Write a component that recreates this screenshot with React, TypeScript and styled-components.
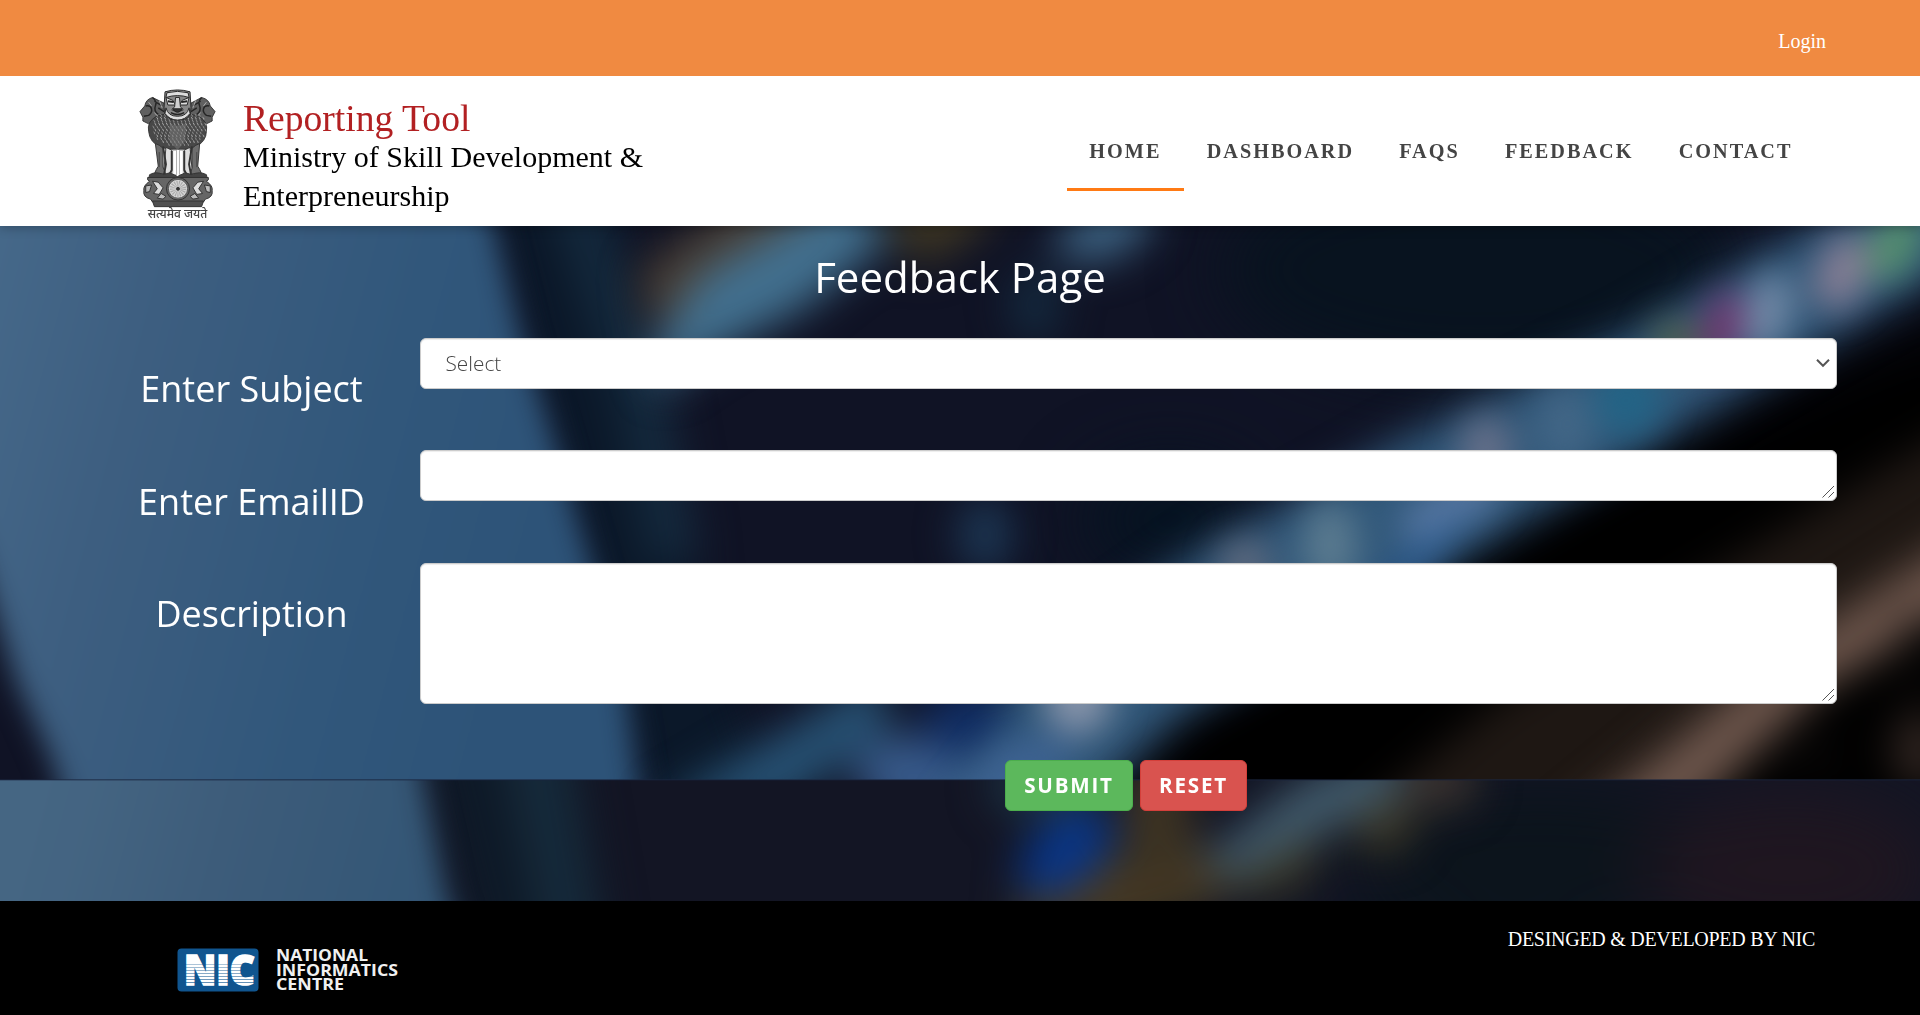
import React from 'react';
import styled, { createGlobalStyle } from 'styled-components';

const serif = `"Liberation Serif", "Times New Roman", serif`;
const sans = `"Open Sans", "Noto Sans", sans-serif`;

const GlobalStyle = createGlobalStyle`
  *, *::before, *::after { box-sizing: border-box; }
  body { margin: 0; background: #000; font-family: ${sans}; }
`;

const Page = styled.div`
  display: flex;
  flex-direction: column;
  width: 100%;
  height: 1015px;
  overflow: hidden;
`;

const TopBar = styled.div`
  display: flex;
  justify-content: flex-end;
  height: 76px;
  padding: 30px 94px 0 0;
  background: #f08a41;
`;

const LoginLink = styled.a`
  color: #fff;
  font: 20px/23px ${serif};
  text-decoration: none;
`;

const Header = styled.header`
  display: flex;
  justify-content: space-between;
  height: 150px;
  padding: 0 105px 0 137px;
  background: #fff;
  position: relative;
  z-index: 1;
  box-shadow: 0 2px 10px rgba(0, 0, 0, 0.25);
  clip-path: inset(0 0 -14px 0);
`;

const Brand = styled.div`
  display: flex;
  gap: 25px;
  padding-top: 10px;
`;

const BrandText = styled.div`
  width: 420px;
  padding-top: 14px;
  font-family: ${serif};
`;

const BrandTitle = styled.div`
  margin-bottom: -1px;
  color: #b22022;
  font-size: 37.6px;
  line-height: 38px;
`;

const BrandSubtitle = styled.div`
  color: #000;
  font-size: 30px;
  line-height: 39px;
`;

const Nav = styled.nav`
  display: flex;
  align-items: flex-start;
  padding-top: 36px;
`;

const NavLink = styled.a<{ $active?: boolean }>`
  height: 79px;
  padding: 27px 22.6px 0;
  border-bottom: 3px solid ${(p) => (p.$active ? '#ff7a14' : 'transparent')};
  color: #444;
  font: bold 20.25px/24px ${serif};
  letter-spacing: 2px;
  text-decoration: none;
`;

const Main = styled.main`
  position: relative;
  z-index: 0;
  height: 675px;
  padding: 0 83px;
  overflow: hidden;
`;

const Backdrop = styled.svg`
  position: absolute;
  inset: 0;
  z-index: -1;
`;

const PageTitle = styled.h1`
  margin: 0;
  padding-top: 21px;
  height: 112px;
  color: #fff;
  font-size: 42px;
  font-weight: 400;
  line-height: 60px;
  text-align: center;
`;

const Form = styled.form`
  display: grid;
  grid-template-columns: 337px 1417px;
`;

const Label = styled.label<{ $top?: number }>`
  padding-top: ${(p) => p.$top ?? 26}px;
  color: #fff;
  font-size: 36px;
  line-height: 50px;
  text-align: center;
`;

const Field = styled.div<{ $height: number }>`
  position: relative;
  display: flex;
  align-items: flex-start;
  height: ${(p) => p.$height}px;
`;

const controlStyle = `
  display: block;
  width: 100%;
  margin: 0;
  border: 1px solid #ccc;
  border-radius: 6px;
  background-color: #fff;
  color: #444;
  font-family: ${sans};
  font-size: 20.8px;
  font-weight: 300;
  box-shadow: inset 0 1px 1px rgba(0, 0, 0, 0.075);
  outline: none;
`;

const Select = styled.select`
  ${controlStyle}
  height: 51px;
  padding: 0 24.5px 2px;
  appearance: none;
`;

const TextArea = styled.textarea<{ $height: number }>`
  ${controlStyle}
  height: ${(p) => p.$height}px;
  padding: 10px 20px;
  resize: none;
`;

const Chevron = styled.svg`
  position: absolute;
  top: 20px;
  right: 7px;
  pointer-events: none;
`;

const Grip = styled.svg<{ $top: number }>`
  position: absolute;
  top: ${(p) => p.$top}px;
  right: 2px;
  pointer-events: none;
`;

const Actions = styled.div`
  grid-column: 2;
  display: flex;
  justify-content: center;
  gap: 7px;
  padding-right: 5px;
`;

const Button = styled.button<{ $color: string; $edge: string; $width: number }>`
  width: ${(p) => p.$width}px;
  height: 51px;
  padding: 0;
  border: 1px solid ${(p) => p.$edge};
  border-radius: 6px;
  background: ${(p) => p.$color};
  color: #fff;
  font: bold 20.6px/27px ${sans};
  letter-spacing: 1.8px;
`;

const Footer = styled.footer`
  display: flex;
  justify-content: space-between;
  height: 114px;
  padding: 27px 105px 0 176px;
  background: #000;
`;

const Credit = styled.div`
  color: #fff;
  font: 20px/23px ${serif};
  letter-spacing: -0.28px;
`;

const NicLogo = styled.svg`
  display: block;
  margin-top: 9px;
`;

function Emblem() {
  const curls: React.ReactNode[] = [];
  for (let r = 0; r < 11; r++) {
    const half = [22, 24, 25, 26, 26, 26, 25, 24, 22, 18, 10][r];
    for (let x = -half; x <= half; x += 4) {
      curls.push(
        <path
          key={`${r}-${x}`}
          d={`M${40 + x + (r % 2) * 2} ${27 + r * 3.1}q1.6 .2 1.4 2.4`}
          stroke={r % 2 ? '#b5b5b5' : '#999'}
          strokeWidth="0.9"
          fill="none"
        />,
      );
    }
  }
  return (
    <svg width="81" height="136" viewBox="0 0 81 136" preserveAspectRatio="none" aria-label="State Emblem of India">
      <g stroke="#2d2d2d" strokeWidth="0.9" strokeLinejoin="round">
        <path d="M26 15L14 9Q7 11 6 18L1 24L4 30L4 34L10 37L13 35L18 42L29 38Z" fill="#606060" />
        <path d="M54 15L65 9Q73 11 74 18L79 24L76 30L76 34L70 37L67 35L62 42L51 38Z" fill="#606060" />
        <path d="M14 9Q19 13 17 18T20 27M7 18Q12 17 13 21T10 28L5 29M16 13L24 18M20 20L26 24M65 9Q61 13 63 18T60 27M73 18Q68 17 67 21T70 28L75 29M64 13L56 18M60 20L54 24" fill="none" stroke="#252525" strokeWidth="1.5" />
        <path d="M10 14L13 18M16 25L20 30M21 12L24 20M70 14L67 18M64 25L60 30M59 12L56 20" fill="none" stroke="#b5b5b5" />
        <path d="M18 29Q8 35 10 45Q11 57 23 62Q31 65 40 64Q50 65 58 62Q70 56 70 45Q72 35 62 29Q52 25 40 26Q28 25 18 29Z" fill="#484848" />
      </g>
      <g>{curls}</g>
      <path d="M32 36Q40 42 49 36L48 55L40 65L32 55Z" fill="#777" opacity=".5" />
      <g stroke="#242424" strokeWidth="1">
        <path d="M27 3Q40 -1 53 3L54 20Q54 29 48 32H33Q26 29 26 20Z" fill="#888" />
        <path d="M29 4Q40 1 51 4L52 9Q40 5 28 9Z" fill="#ddd" />
        <path d="M28 9L35 12L38 17L30 17ZM52 9L45 12L42 17L50 17Z" fill="#ddd" />
        <path d="M30 13L36 14M44 14L50 13" strokeWidth="2" />
        <path d="M38 9L37 19L34 22L40 25L46 22L43 19L42 9Z" fill="#cfcfcf" />
        <path d="M35 21L45 21L42 24H38Z" fill="#333" />
        <path d="M28 20Q30 29 40 29Q50 29 52 20L53 26Q48 33 40 33Q32 33 27 26Z" fill="#ddd" />
        <path d="M33 25Q40 29 47 25" fill="none" strokeWidth="1.6" />
      </g>
      <g stroke="#333" strokeWidth="1">
        <path d="M17 58Q21 59 25 63V83L28 90H16Q18 85 20 82Z" fill="#6d6d6d" />
        <path d="M63 58Q59 59 55 63V83L52 90H65Q63 85 61 82Z" fill="#6d6d6d" />
        <path d="M28 62L34 65L34 88L28 93L26 84Z" fill="#dedede" />
        <path d="M53 62L47 65L47 88L53 93L55 84Z" fill="#dedede" />
        <path d="M35 65H39V91H35ZM42 65H46V91H42Z" fill="#fff" stroke="#aaa" />
        <path d="M25 61L28 80L26 91M55 61L52 80L54 91M34 66V86L30 94M47 66V86L51 94" fill="none" strokeWidth="2" />
        <path d="M21 67V83M60 67V83" stroke="#444" />
        <path d="M11 91Q18 87 25 91L32 89L40 93L48 89L55 91Q63 87 70 91L71 96H10Z" fill="#444" />
      </g>
      <g stroke="#303030" strokeWidth="1">
        <path d="M9 94H72Q73 97 70 98Q77 103 76 108Q77 115 69 117L67 120H14L12 117Q4 115 5 108Q4 103 11 98Q8 97 9 94Z" fill="#666" />
        <path d="M14 98L20 99L25 105L21 112L15 111L19 106ZM67 98L61 99L56 105L60 112L66 111L62 106Z" fill="#ddd" />
        <path d="M7 103L13 102L11 109L7 110ZM74 103L68 102L70 109L74 110ZM23 111L28 114L25 117L19 116ZM58 111L53 114L56 117L62 116Z" fill="#bbb" />
        <path d="M14 119H67L65 125H16Z" fill="#505050" />
        <circle cx="40.5" cy="106" r="12" fill="#666" />
        <circle cx="40.5" cy="106" r="10" fill="#d7d7d7" stroke="#555" />
        <circle cx="40.5" cy="106" r="5.5" fill="none" stroke="#aaa" strokeWidth="6" strokeDasharray="1 1" />
        <circle cx="40.5" cy="106" r="1.6" fill="#333" />
      </g>
    </svg>
  );
}

const EmblemBox = styled.div`
  display: flex;
  flex-direction: column;
  align-items: center;
  width: 81px;
  margin-top: 3px;
`;

const EmblemArt = styled.div`
  height: 119px;
  svg { display: block; width: 78px; height: 128px; }
`;

const Motto = styled.div`
  color: #444;
  font: 500 12px/14px "Noto Sans Devanagari", "Lohit Devanagari", "FreeSans", "Noto Sans", sans-serif;
  white-space: nowrap;
`;

/* One 1920x780 tile of the out-of-focus photograph; it repeats vertically.
   The small light spots all lie below the part that the second tile shows. */
function Scene({ spots = false }: { spots?: boolean }) {
  return (
    <g>
      <rect x="-60" y="-60" width="2040" height="900" fill="#101325" />
      <g filter="url(#haze)">
        <ellipse cx="1480" cy="270" rx="260" ry="110" fill="#08131f" />
        <ellipse cx="1540" cy="80" rx="200" ry="80" fill="#09111c" />
        <ellipse cx="1790" cy="90" rx="150" ry="80" fill="#1d1420" />
        <ellipse cx="1170" cy="520" rx="90" ry="60" fill="#061321" />
        <path d="M2000 290L1850 345L1530 500L1390 590L1180 700L1040 840H2000Z" fill="#000" />
      </g>
      <g filter="url(#wide)">
        <path d="M425 -60L470 121L500 226L600 620L650 820H780L690 560L620 226L570 -60Z" fill="#0b1829" />
        <path d="M500 -60L560 226L620 400L650 560H700L670 400L610 226L560 -60Z" fill="#183045" opacity=".75" />
        <path d="M2000 400L1500 700L1330 840H1560L1700 720L2000 540Z" fill="#1e1713" />
      </g>
      <g filter="url(#edge)">
        <path d="M-120 -90H405L448 121L494 226L522 340L554 440L590 560L625 680L648 860H82L52 760L16 680L-12 590L-40 500L-120 300Z" fill="url(#blue)" />
      </g>
      <g filter="url(#streak)">
        <path d="M640 270L740 200L840 200L700 290L650 330Z" fill="#5e4d3a" opacity=".75" />
        <path d="M880 220L930 190L1010 190L970 240L920 268Z" fill="#443b22" opacity=".85" />
        <path d="M650 350L700 275L850 190L890 240L800 310L710 355L660 390Z" fill="#42708f" />
        <ellipse cx="1105" cy="230" rx="52" ry="28" transform="rotate(-25 1105 230)" fill="#3c6282" />
        <ellipse cx="1035" cy="305" rx="24" ry="38" fill="#142b40" />
        <ellipse cx="985" cy="535" rx="26" ry="38" fill="#1d3957" />
        <path d="M1990 150L1810 228L1630 332L1400 440L1200 550L1000 690L900 830H1060L1180 715L1430 575L1620 465L1810 350L1990 245Z" fill="#31587a" />
        <path d="M650 810L810 715L880 670L890 730L780 810Z" fill="#265072" />
        <ellipse cx="910" cy="775" rx="55" ry="40" fill="#375989" />
        <ellipse cx="965" cy="720" rx="42" ry="36" fill="#102c62" />
      </g>
      {spots && (
        <g filter="url(#spot)">
          <ellipse cx="1895" cy="245" rx="24" ry="40" transform="rotate(30 1895 245)" fill="#55906e" />
          <ellipse cx="1842" cy="272" rx="26" ry="40" transform="rotate(20 1842 272)" fill="#847d94" />
          <ellipse cx="1768" cy="312" rx="24" ry="42" transform="rotate(15 1768 312)" fill="#7088a5" />
          <ellipse cx="1722" cy="328" rx="20" ry="40" transform="rotate(12 1722 328)" fill="#6f366f" />
          <ellipse cx="1676" cy="342" rx="26" ry="22" fill="#50604c" />
          <ellipse cx="1628" cy="400" rx="34" ry="36" fill="#236486" />
          <ellipse cx="1565" cy="425" rx="30" ry="40" fill="#426686" />
          <ellipse cx="1486" cy="448" rx="26" ry="32" fill="#687089" />
          <ellipse cx="1450" cy="508" rx="55" ry="22" transform="rotate(-26 1450 508)" fill="#5878a3" />
          <ellipse cx="1330" cy="545" rx="28" ry="44" fill="#5a7a8f" />
          <ellipse cx="1245" cy="564" rx="26" ry="24" fill="#626a7d" />
          <path d="M1360 600L1420 540L1480 505L1390 610Z" fill="#2e5d92" />
          <ellipse cx="1078" cy="698" rx="34" ry="36" fill="#8794aa" />
          <path d="M940 820L1000 740L1080 735L1030 820Z" fill="#3d6291" />
        </g>
      )}
      <g filter="url(#streak)">
        <path d="M1990 515L1780 650L1560 830H1675L1820 690L1990 590Z" fill="#6c554b" />
        <ellipse cx="1810" cy="752" rx="32" ry="28" fill="#060505" />
        <ellipse cx="1920" cy="660" rx="25" ry="40" fill="#060505" />
        <ellipse cx="1920" cy="750" rx="28" ry="40" fill="#302521" />
        <ellipse cx="1130" cy="112" rx="120" ry="36" transform="rotate(-12 1130 112)" fill="#463924" />
        <ellipse cx="1158" cy="40" rx="36" ry="70" fill="#3d3223" />
        <ellipse cx="1275" cy="80" rx="50" ry="32" transform="rotate(-30 1275 80)" fill="#3a3726" />
        <ellipse cx="1383" cy="40" rx="32" ry="34" fill="#3b3729" />
        <ellipse cx="1440" cy="0" rx="38" ry="30" fill="#3a3230" />
        <path d="M1200 80L1300 0L1400 -40L1400 15L1310 60L1230 100Z" fill="#405a6e" />
        <ellipse cx="1045" cy="5" rx="55" ry="35" fill="#1b3046" />
        <ellipse cx="1066" cy="72" rx="56" ry="34" transform="rotate(-42 1066 72)" fill="#06348c" />
      </g>
    </g>
  );
}

const blurs = [
  ['spot', 17],
  ['edge', 14],
  ['streak', 21],
  ['wide', 20],
  ['haze', 34],
] as const;

function Photo() {
  return (
    <Backdrop width="1920" height="675" viewBox="0 226 1920 675">
      <defs>
        {blurs.map(([id, deviation]) => (
          <filter key={id} id={id} filterUnits="userSpaceOnUse" x="-200" y="-200" width="2320" height="1200" colorInterpolationFilters="sRGB">
            <feGaussianBlur stdDeviation={deviation} />
          </filter>
        ))}
        <linearGradient id="blue" gradientUnits="userSpaceOnUse" x1="0" y1="170" x2="600" y2="330">
          <stop offset="0" stopColor="#46698a" />
          <stop offset=".3" stopColor="#3d5e80" />
          <stop offset=".7" stopColor="#31577b" />
          <stop offset="1" stopColor="#2d5378" />
        </linearGradient>
        <clipPath id="upper"><rect x="0" y="226" width="1920" height="554" /></clipPath>
        <clipPath id="lower"><rect x="0" y="780" width="1920" height="121" /></clipPath>
      </defs>
      <g clipPath="url(#upper)"><Scene spots /></g>
      <g clipPath="url(#lower)">
        <g transform="translate(0 780)"><Scene /></g>
        <rect x="0" y="780" width="1920" height="121" fill="#404a28" opacity=".06" />
      </g>
      <rect x="0" y="779" width="1920" height="1.5" fill="#1a2740" opacity=".6" />
    </Backdrop>
  );
}

function ResizeGrip({ top }: { top: number }) {
  return (
    <Grip $top={top} width="14" height="14" viewBox="0 0 14 14">
      <path d="M1.5 12.5L13 1M7.5 12.5L13 7" stroke="#555" strokeWidth="1" fill="none" />
    </Grip>
  );
}

function Nic() {
  return (
    <NicLogo width="228" height="66" viewBox="0 -10 228 66">
      <rect x="1.5" y="1.5" width="81" height="43" rx="4" fill="#10558f" />
      <g fontFamily='"Open Sans", sans-serif' fill="#fff">
        <text x="8" y="38" fontSize="42" fontWeight="800" textLength="71" lengthAdjust="spacingAndGlyphs" stroke="#fff" strokeWidth="1.6">NIC</text>
        <g fontSize="16" fontWeight="700" fill="#f0f0f0">
          <text x="100" y="14.3" textLength="92" lengthAdjust="spacingAndGlyphs">NATIONAL</text>
          <text x="100" y="28.6" textLength="122" lengthAdjust="spacingAndGlyphs">INFORMATICS</text>
          <text x="100" y="42.6" textLength="68" lengthAdjust="spacingAndGlyphs">CENTRE</text>
        </g>
      </g>
      {[17, 20, 23, 26, 29, 32, 35].map((y, i) => (
        <rect key={y} x="6" y={y} width="74" height="1" fill="#10558f" opacity={0.35 + i * 0.05} />
      ))}
    </NicLogo>
  );
}

const links = ['HOME', 'DASHBOARD', 'FAQS', 'FEEDBACK', 'CONTACT'];

export default function App() {
  return (
    <Page>
      <GlobalStyle />
      <TopBar><LoginLink>Login</LoginLink></TopBar>
      <Header>
        <Brand>
          <EmblemBox>
            <EmblemArt><Emblem /></EmblemArt>
            <Motto>सत्यमेव जयते</Motto>
          </EmblemBox>
          <BrandText>
            <BrandTitle>Reporting Tool</BrandTitle>
            <BrandSubtitle>Ministry of Skill Development &amp; Enterpreneurship</BrandSubtitle>
          </BrandText>
        </Brand>
        <Nav>
          {links.map((l) => <NavLink key={l} $active={l === 'HOME'}>{l}</NavLink>)}
        </Nav>
      </Header>
      <Main>
        <Photo />
        <PageTitle>Feedback Page</PageTitle>
        <Form onSubmit={(e) => e.preventDefault()}>
          <Label htmlFor="subject">Enter Subject</Label>
          <Field $height={112}>
            <Select id="subject"><option>Select</option></Select>
            <Chevron width="14" height="10" viewBox="0 0 14 10">
              <path d="M1 1.8L7 7.8L13 1.8" fill="none" stroke="#555" strokeWidth="2" />
            </Chevron>
          </Field>
          <Label htmlFor="email" $top={27}>Enter EmailID</Label>
          <Field $height={113}>
            <TextArea id="email" $height={51} />
            <ResizeGrip top={35} />
          </Field>
          <Label htmlFor="description">Description</Label>
          <Field $height={197}>
            <TextArea id="description" $height={141} />
            <ResizeGrip top={125} />
          </Field>
          <Actions>
            <Button type="submit" $color="#5cb85c" $edge="#4cae4c" $width={128}>SUBMIT</Button>
            <Button type="reset" $color="#d9534f" $edge="#d43f3a" $width={107}>RESET</Button>
          </Actions>
        </Form>
      </Main>
      <Footer>
        <Nic />
        <Credit>DESINGED &amp; DEVELOPED BY NIC</Credit>
      </Footer>
    </Page>
  );
}
